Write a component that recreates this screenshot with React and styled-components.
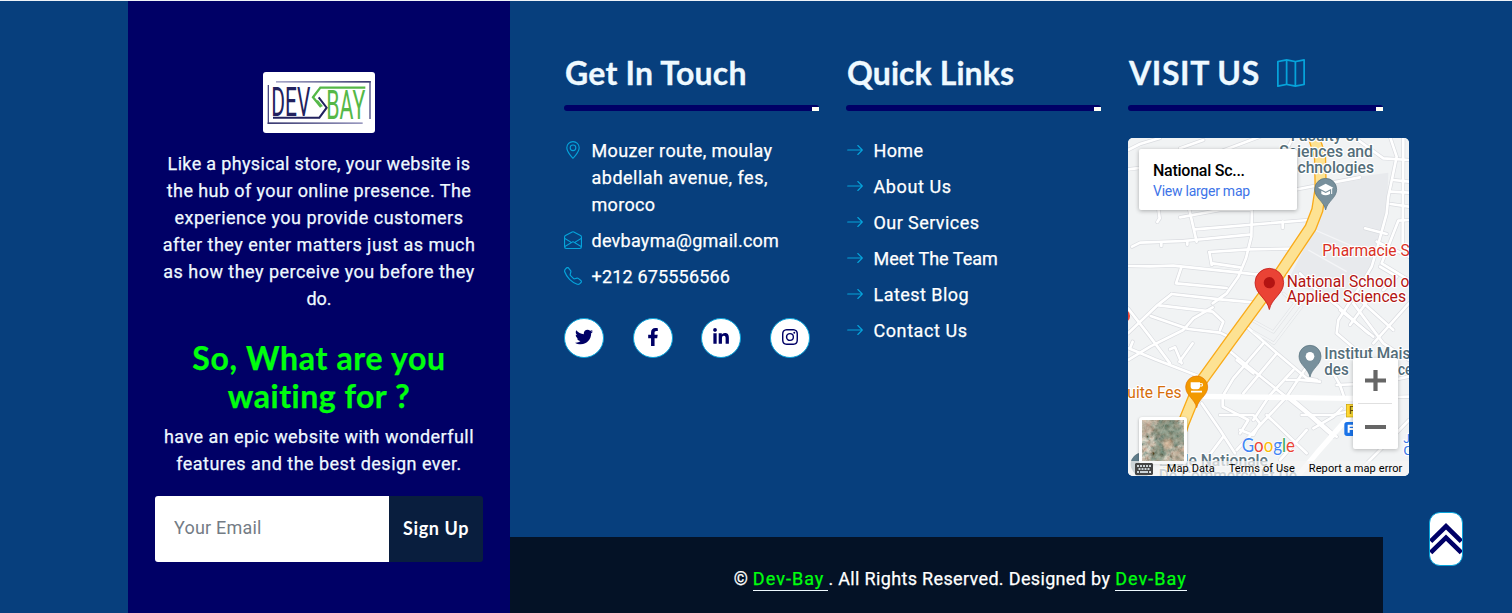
import React from "react";
import styled, { createGlobalStyle } from "styled-components";
import {
  BsGeoAlt,
  BsEnvelopeOpen,
  BsTelephone,
  BsArrowRight,
  BsMap,
  BsInstagram,
} from "react-icons/bs";
import { FaTwitter, FaFacebookF, FaLinkedinIn, FaKeyboard } from "react-icons/fa";

const c = {
  page: "#073f7d",
  navy: "#000066",
  dark: "#041226",
  button: "#091e3e",
  cyan: "#06a3da",
  pale: "#eef9ff",
  lime: "#00ff0d",
};

const bodyFont = `Roboto, "Liberation Sans", sans-serif`;
const titleFont = `Lato, "Open Sans", sans-serif`;

const GlobalStyle = createGlobalStyle`
  * { box-sizing: border-box; }
  html, body { margin: 0; background: ${c.page}; }
  body { font: 400 18px/27px ${bodyFont}; color: #fff; overflow: hidden; }
  a { color: inherit; text-decoration: none; }
`;

const Footer = styled.footer`
  display: flex;
  height: 613px;
  padding-left: 128px;
  border-top: 1px solid #eef3f8;
  background: ${c.page};
`;

const Brand = styled.aside`
  width: 382px;
  padding: 71px 27px 0;
  display: flex;
  flex-direction: column;
  align-items: center;
  background: ${c.navy};
  color: ${c.pale};
`;

const LogoBox = styled.div`
  width: 112px;
  height: 61px;
  margin-bottom: 17px;
  border-radius: 3px;
  background: #fff;
  svg { display: block; }
`;

const Paragraph = styled.p`
  margin: 0;
  text-align: center;
`;

const Line = styled.span`
  display: block;
  width: max-content;
  margin: ${(p) => (p.$center ? "0 auto" : "0")};
  letter-spacing: ${(p) => p.$track || 0}px;
  white-space: pre;
  -webkit-text-stroke: 0.25px currentColor;
`;

const Slogan = styled.h2`
  margin: 26.5px 0 7.5px;
  font: 700 32px/38.4px ${titleFont};
  color: ${c.lime};
`;

const SignUp = styled.form`
  display: flex;
  width: 328px;
  height: 66px;
  margin-top: 19px;
  border-radius: 3px;
  overflow: hidden;
`;

const Email = styled.input`
  width: 234px;
  padding: 0 19px 2px;
  border: 0;
  background: #fff;
  font: 400 18px ${bodyFont};
  letter-spacing: 0.2px;
  &::placeholder { color: #747c85; opacity: 1; }
`;

const SignButton = styled.button`
  flex: 1;
  padding: 0 0 2px;
  border: 0;
  background: ${c.button};
  color: #fff;
  font: 700 18px ${titleFont};
  letter-spacing: 0.6px;
`;

const Main = styled.div`
  width: 873px;
  display: flex;
  flex-direction: column;
  justify-content: space-between;
`;

const Columns = styled.div`
  display: grid;
  grid-template-columns: repeat(3, 255px);
  column-gap: 27px;
  padding: 53px 0 0 54px;
`;

const Title = styled.h3`
  display: flex;
  align-items: center;
  height: 38px;
  margin: 0 0 13px;
  padding-left: 1px;
  font: 700 32px/38px ${titleFont};
  letter-spacing: ${(p) => p.$track}px;
  color: ${c.pale};
  white-space: pre;
  -webkit-text-stroke: 0.3px currentColor;
  svg { margin: -1px 0 0 17px; color: ${c.cyan}; }
`;

const Rule = styled.div`
  display: flex;
  justify-content: flex-end;
  align-items: flex-end;
  height: 6px;
  margin-bottom: ${(p) => p.$gap || 25.5}px;
  border-radius: 3px 3px 0 3px;
  background: ${c.navy};
  &::after { content: ""; width: 7px; height: 4px; background: #fffff4; }
`;

const List = styled.ul`
  display: flex;
  flex-direction: column;
  gap: 9px;
  margin: 0;
  padding: 0;
  list-style: none;
`;

const Item = styled.li`
  display: flex;
  gap: 9.5px;
  > svg { flex: none; margin-top: 4px; color: ${c.cyan}; }
`;

const Socials = styled.div`
  display: flex;
  justify-content: space-between;
  width: 246px;
  margin-top: 28px;
`;

const Social = styled.a`
  display: flex;
  align-items: center;
  justify-content: center;
  width: 40px;
  height: 40px;
  border: 1px solid ${c.cyan};
  border-radius: 50%;
  background: #fff;
  color: ${c.navy};
  padding-bottom: 2px;
`;

const MapFrame = styled.div`
  position: relative;
  width: 281px;
  height: 338px;
  border-radius: 5px;
  overflow: hidden;
  background: #f1f3f4;
  > svg { display: block; }
`;

const PlaceCard = styled.div`
  position: absolute;
  left: 11px;
  top: 11px;
  width: 158px;
  height: 61px;
  padding: 11px 14px;
  border-radius: 2px;
  background: #fff;
  box-shadow: 0 1px 4px rgba(0, 0, 0, 0.3);
`;

const PlaceName = styled.div`
  font: 500 16px/21px ${bodyFont};
  letter-spacing: -0.26px;
  color: #000;
`;

const PlaceLink = styled.a`
  display: block;
  font: 400 14px/20px ${bodyFont};
  letter-spacing: -0.25px;
  color: #3d74e8;
`;

const Zoom = styled.div`
  position: absolute;
  left: 225px;
  top: 220px;
  width: 45px;
  height: 91px;
  border-radius: 2px;
  background: #fff;
  box-shadow: 0 1px 4px rgba(0, 0, 0, 0.25);
`;

const Satellite = styled.div`
  position: absolute;
  left: 11px;
  top: 279px;
  width: 48px;
  height: 47px;
  padding: 3px;
  border-radius: 3px;
  background: #fff;
  box-shadow: 0 1px 3px rgba(0, 0, 0, 0.3);
  svg { display: block; }
`;

const Attribution = styled.div`
  position: absolute;
  left: 0;
  right: 0;
  bottom: 0;
  display: flex;
  align-items: center;
  gap: 13.8px;
  height: 15px;
  padding-left: 7px;
  background: rgba(245, 245, 245, 0.72);
  font: 400 11px/15px ${bodyFont};
  letter-spacing: 0.1px;
  color: #000;
  white-space: nowrap;
  svg { color: #454545; }
`;

const Copyright = styled.div`
  display: flex;
  justify-content: center;
  height: 76px;
  padding: 28px 0 0 27.5px;
  background: ${c.dark};
`;

const Credit = styled.a`
  height: 26px;
  margin: 0 0 0 5px;
  padding-right: ${(p) => p.$pad || 0}px;
  border-bottom: 1px solid #eef9ff;
  color: ${c.lime};
  letter-spacing: 1.03px;
  -webkit-text-stroke: 0.25px currentColor;
`;

const ToTop = styled.a`
  position: fixed;
  right: 49px;
  bottom: 47px;
  width: 34px;
  height: 54px;
  border: 1px solid ${c.cyan};
  border-radius: 11px;
  overflow: hidden;
  background: #fff;
  svg { display: block; }
`;

function Logo() {
  return (
    <svg width="112" height="61" viewBox="24 21 336 183">
      <defs>
        <linearGradient id="top" x1="0" x2="1">
          <stop offset="0" stopColor="#aaaacb" />
          <stop offset="1" stopColor="#38386f" />
        </linearGradient>
        <linearGradient id="bottom" x1="0" x2="1">
          <stop offset="0" stopColor="#38386f" />
          <stop offset="1" stopColor="#9a9ac0" />
        </linearGradient>
      </defs>
      <g fill="#4b4b83">
        <rect x="63" y="48" width="284" height="5" fill="url(#top)" />
        <rect x="343" y="48" width="4" height="114" />
        <rect x="38" y="60" width="4" height="117" />
        <rect x="38" y="172" width="285" height="5" fill="url(#bottom)" />
      </g>
      <text x="49" y="152" fill="#22225e" fontFamily={bodyFont} fontSize="122" textLength="117" lengthAdjust="spacingAndGlyphs">DEV</text>
      <text x="214" y="161" fill="#55b848" fontFamily={bodyFont} fontSize="122" textLength="117" lengthAdjust="spacingAndGlyphs">BAY</text>
      <path d="M331 68H196L174 97L198 126" fill="none" stroke="#55b848" strokeWidth="7" />
      <path d="M54 158H193L215 128L191 97" fill="none" stroke="#22225e" strokeWidth="6" />
      <path d="M187 106L202 124" stroke="#55b848" strokeWidth="4" />
    </svg>
  );
}

const streets = [
  "M24 118L190 98L300 65L420 20",
  "M180 55L250 30",
  "M24 60L60 42L120 24",
  "M500 60L520 20",
  "M112 215L119 265L112 276",
  "M180 262L300 240L395 240",
  "M207 235L230 335",
  "M396 230L394 320L378 385L355 440L320 490L278 520",
  "M226 298L565 270",
  "M488 275V294",
  "M36 350L60 338L190 333L388 314",
  "M124 338V348M202 334V344",
  "M268 366L390 358L520 356",
  "M268 366L275 405M278 400L360 412",
  "M24 408L90 409L160 407L360 428L415 434",
  "M184 412L168 460L320 474",
  "M155 492L300 508L400 517",
  "M116 526L278 545L310 575L300 600",
  "M278 532L220 565L190 600L90 650L24 690",
  "M92 558L205 597L300 608L325 620",
  "M24 610L112 526L155 492",
  "M24 535L90 620L150 700",
  "M26 655L105 688L235 738",
  "M30 655L38 635",
  "M150 658L165 652L185 700M178 695L218 640",
  "M380 590L460 660L560 745L590 750",
  "M325 660L410 730L560 850L640 920",
  "M430 640L340 745L310 795",
  "M470 670L370 790",
  "M520 720L450 795L400 870",
  "M560 710L500 800L350 960",
  "M400 730L350 690",
  "M240 798L700 804L867 800",
  "M308 800V830L385 870L360 910",
  "M245 820L300 900L345 970",
  "M300 855L400 855L420 880L400 915L360 900",
  "M310 920L250 1000",
  "M440 855L560 970M510 800L650 920",
  "M545 855L640 855L700 840",
  "M580 895L640 860L665 835",
  "M650 765L770 760L867 740",
  "M500 750L540 750L600 755",
  "M867 870L780 960L720 1020",
  "M560 900L480 990",
  "M640 730L660 765L672 800",
  "M867 90L790 85L700 20",
  "M520 180L720 142",
  "M810 20L830 80L805 200L800 250L770 360L755 410L720 470L655 570L650 610L720 670L770 700",
  "M735 295L800 312",
  "M867 230L812 222M867 188L812 185M867 155L820 150",
  "M850 24L848 340",
  "M867 270L835 272L785 400L867 450",
  "M780 410L830 440L790 480",
  "M700 520L790 640L867 690",
  "M660 540L760 620M720 510L820 600",
  "M540 430L590 480L655 530L745 610",
  "M760 640L867 520M690 585L745 510",
  "M770 335L867 380",
];

const lanes = [
  "M490 490L525 520L460 606L395 570",
  "M545 530L462 640L400 605",
];

const label = { fontFamily: bodyFont, stroke: "#fff", strokeWidth: 7, paintOrder: "stroke", strokeLinejoin: "round" };

function Label({ x, y, w, fill, children, weight = 400, size = 47 }) {
  return (
    <text {...label} x={x} y={y} fill={fill} fontSize={size} fontWeight={weight} textLength={w} lengthAdjust="spacingAndGlyphs">
      {children}
    </text>
  );
}

function Pin({ x, y, fill, edge, children, scale = 1 }) {
  return (
    <g transform={`translate(${x} ${y}) scale(${scale})`}>
      <path d="M0 62C-5 36-33 26-33 0A33 33 0 0 1 33 0C33 26 5 36 0 62Z" fill={fill} stroke={edge} strokeWidth="2" />
      {children}
    </g>
  );
}

function MapDrawing() {
  const road = "M575 0L600 80L602 175L592 240L572 292L480 430L330 635L238 762L190 880L140 1040";
  return (
    <svg width="281" height="338" viewBox="24 24 843 1014">
      <rect x="24" y="24" width="843" height="1014" fill="#f1f3f4" />
      <path d="M640 150L805 128L800 250L760 400L700 520L500 460L560 340L610 230Z" fill="#e8eaed" />
      <path d="M585 300L700 350M565 360L680 425" stroke="#f4f5f7" strokeWidth="4" />
      <g fill="none" strokeLinejoin="round" strokeLinecap="round">
        {streets.map((d) => <path key={d} d={d} stroke="#dadce0" strokeWidth="12" />)}
        {lanes.map((d) => <path key={d} d={d} stroke="#dfe1e4" strokeWidth="9" />)}
        {streets.map((d) => <path key={d} d={d} stroke="#fff" strokeWidth="8" />)}
        {lanes.map((d) => <path key={d} d={d} stroke="#f3f5f6" strokeWidth="6" />)}
        <path d="M235 799L700 805M700 845L590 970L540 1030" stroke="#fff" strokeWidth="16" />
        <path d={road} stroke="#f9ab1a" strokeWidth="37" />
        <path d={road} stroke="#fde293" strokeWidth="29" />
      </g>

      <Label x="512" y="34" w="208" fill="#546e7a" weight="500">Faculty of</Label>
      <Label x="478" y="82" w="281" fill="#546e7a" weight="500">Sciences and</Label>
      <Label x="481" y="129" w="281" fill="#546e7a" weight="500">Technologies</Label>
      <Label x="607" y="377" w="262" fill="#d93025">Pharmacie S</Label>
      <Label x="500" y="470" w="368" fill="#b31412">National School o</Label>
      <Label x="500" y="517" w="358" fill="#b31412">Applied Sciences</Label>
      <Label x="613" y="688" w="258" fill="#546e7a" weight="500">Institut Mais</Label>
      <Label x="613" y="735" w="73" fill="#546e7a" weight="500">des</Label>
      <Label x="834" y="735" w="43" fill="#546e7a" weight="500">ce</Label>
      <Label x="22" y="803" w="163" fill="#d56e0c">uite Fes</Label>
      <Label x="116" y="1008" w="328" fill="#607783" weight="500">Ecole Nationale</Label>
      <Label x="116" y="1054" w="415" fill="#607783" weight="500">De Commerce Et De</Label>
      <Label x="850" y="938" w="20" fill="#3b78e7" size="40">J</Label>
      <Label x="850" y="974" w="28" fill="#3b78e7" size="40">C</Label>

      <Pin x={617} y={178} fill="#78909c" edge="#546e7a">
        <path d="M-23 -5L0 -17L23 -5L0 7Z" fill="#fff" />
        <path d="M-13 4V14Q0 22 13 14V4L0 11Z" fill="#fff" />
        <path d="M18 -4V14" stroke="#fff" strokeWidth="3" />
      </Pin>
      <Pin x={570} y={679} fill="#78909c" edge="#546e7a">
        <circle r="13" fill="#fff" />
      </Pin>
      <Pin x={230} y={771} fill="#f29900" edge="#e37400">
        <path d="M-18 -14H10V-2Q10 7 2 7H-10Q-18 7-18-2Z" fill="#fff" />
        <path d="M10 -10H17V-3H10" fill="none" stroke="#fff" strokeWidth="3" />
        <path d="M-17 14H16" stroke="#fff" strokeWidth="5" />
      </Pin>
      <Pin x={66} y={1002} fill="#607d8b" edge="#546e7a" />
      <Pin x={448} y={458} fill="#ea4335" edge="#c5221f" scale={1.3}>
        <circle r="13" fill="#b31412" />
      </Pin>
      <circle cx="10" cy="558" r="20" fill="#ea4335" />

      <rect x="679" y="823" width="60" height="38" fill="#fdd835" stroke="#c9a100" strokeWidth="2" />
      <text x="687" y="853" fontFamily={bodyFont} fontSize="32" fill="#5f4a00">P</text>
      <rect x="673" y="876" width="60" height="42" rx="8" fill="#1a73e8" />
      <path d="M686 908V887H710M686 897H706" fill="none" stroke="#fff" strokeWidth="6" />

      <text x="365" y="967" fontFamily={`Lato, ${bodyFont}`} fontSize="55" fontWeight="400" textLength="160" lengthAdjust="spacingAndGlyphs" stroke="#fff" strokeWidth="4" paintOrder="stroke">
        <tspan fill="#4285f4">G</tspan>
        <tspan fill="#ea4335">o</tspan>
        <tspan fill="#fbbc04">o</tspan>
        <tspan fill="#4285f4">g</tspan>
        <tspan fill="#34a853">l</tspan>
        <tspan fill="#ea4335">e</tspan>
      </text>
    </svg>
  );
}

function SatelliteImage() {
  return (
    <svg width="42" height="41" viewBox="0 0 42 41">
      <defs>
        <filter id="terrain" x="0" y="0" width="1" height="1">
          <feTurbulence type="fractalNoise" baseFrequency="0.22" numOctaves="4" seed="8" />
          <feColorMatrix values="1 0.2 0 0 -0.08  0.7 0.5 0 0 -0.12  0.6 0.5 0 0 -0.16  0 0 0 0 1" />
        </filter>
        <filter id="soft"><feGaussianBlur stdDeviation="1.4" /></filter>
      </defs>
      <rect width="42" height="41" filter="url(#terrain)" />
      <g filter="url(#soft)" opacity="0.45">
        <path d="M17 0H34L42 12V22L30 28L20 41H8L14 22L10 12Z" fill="#4c6a58" />
        <circle cx="26" cy="24" r="4.5" fill="#e0b08a" />
        <circle cx="17" cy="18" r="2.5" fill="#243834" />
        <path d="M0 0H14L8 14L0 18Z" fill="#b09680" />
        <path d="M32 28H42V41H30Z" fill="#a58e75" />
      </g>
      <path d="M0 26L16 20L25 0M16 20L42 41" fill="none" stroke="#b5b29f" strokeWidth="0.8" opacity="0.5" />
    </svg>
  );
}

const story = [
  ["Like a physical store, your website is", 0.34],
  ["the hub of your online presence. The", 0.41],
  ["experience you provide customers", 0.49],
  ["after they enter matters just as much", 0.48],
  ["as how they perceive you before they", 0.47],
  ["do.", 0],
];

const links = [
  ["Home", 0.35],
  ["About Us", 0.59],
  ["Our Services", 0.43],
  ["Meet The Team", 0.02],
  ["Latest Blog", 0.45],
  ["Contact Us", 0.57],
];

const socials = [
  ["Twitter", FaTwitter, 18],
  ["Facebook", FaFacebookF, 18],
  ["LinkedIn", FaLinkedinIn, 18],
  ["Instagram", BsInstagram, 16],
];

export default function App() {
  return (
    <>
      <GlobalStyle />
      <Footer>
        <Brand>
          <LogoBox><Logo /></LogoBox>
          <Paragraph>
            {story.map(([t, s]) => <Line key={t} $center $track={s}>{t}</Line>)}
          </Paragraph>
          <Slogan>
            <Line $center $track={0.68}>So, What are you</Line>
            <Line $center $track={0.5}>waiting for ?</Line>
          </Slogan>
          <Paragraph>
            <Line $center $track={0.45}>have an epic website with wonderfull</Line>
            <Line $center $track={0.48}>features and the best design ever.</Line>
          </Paragraph>
          <SignUp>
            <Email placeholder="Your Email" />
            <SignButton type="button">Sign Up</SignButton>
          </SignUp>
        </Brand>

        <Main>
          <Columns>
            <section>
              <Title $track={0.23}>Get In Touch</Title>
              <Rule />
              <List>
                <Item>
                  <BsGeoAlt size={18} />
                  <div>
                    <Line $track={0.4}>Mouzer route, moulay</Line>
                    <Line $track={0.49}>abdellah avenue, fes,</Line>
                    <Line $track={0.31}>moroco</Line>
                  </div>
                </Item>
                <Item>
                  <BsEnvelopeOpen size={18} />
                  <Line $track={0.26}>devbayma@gmail.com</Line>
                </Item>
                <Item>
                  <BsTelephone size={18} />
                  <Line $track={0.18}>+212 675556566</Line>
                </Item>
              </List>
              <Socials>
                {socials.map(([name, Icon, size]) => (
                  <Social key={name} href="#" aria-label={name}><Icon size={size} /></Social>
                ))}
              </Socials>
            </section>

            <section>
              <Title $track={0.09}>Quick Links</Title>
              <Rule />
              <List>
                {links.map(([t, s]) => (
                  <Item key={t}>
                    <BsArrowRight size={18} />
                    <Line as="a" href="#" $track={s}>{t}</Line>
                  </Item>
                ))}
              </List>
            </section>

            <section>
              <Title $track={0.6}>VISIT US<BsMap size={28} /></Title>
              <Rule $gap={27} />
              <MapFrame>
                <MapDrawing />
                <PlaceCard>
                  <PlaceName>National Sc...</PlaceName>
                  <PlaceLink href="#">View larger map</PlaceLink>
                </PlaceCard>
                <Satellite><SatelliteImage /></Satellite>
                <Zoom>
                  <svg width="45" height="91">
                    <path d="M12 22.5H33M22.5 12V33M12 69H33" stroke="#666" strokeWidth="4.2" />
                    <path d="M5 45.5H39" stroke="#e0e0e0" />
                  </svg>
                </Zoom>
                <Attribution>
                  <FaKeyboard size={18} />
                  <span>Map Data</span>
                  <span>Terms of Use</span>
                  <span>Report a map error</span>
                </Attribution>
              </MapFrame>
            </section>
          </Columns>

          <Copyright>
            <Line>©</Line>
            <Credit href="#" $pad={4}>Dev-Bay</Credit>
            <Line $track={0.34}>. All Rights Reserved. Designed by</Line>
            <Credit href="#">Dev-Bay</Credit>
          </Copyright>
        </Main>
      </Footer>

      <ToTop href="#" aria-label="Back to top">
        <svg width="32" height="52" viewBox="180 69 96 156">
          <path d="M182 154L228 109L274 154M182 188L228 143L274 188" fill="none" stroke={c.navy} strokeWidth="14" />
        </svg>
      </ToTop>
    </>
  );
}
